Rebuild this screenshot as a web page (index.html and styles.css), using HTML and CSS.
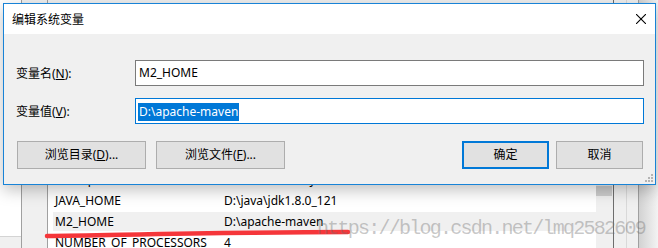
FILE: index.html
```html
<!DOCTYPE html>
<html lang="zh-CN">
<head>
    <meta charset="UTF-8">
    <meta name="viewport" content="width=device-width, initial-scale=1.0">
    <title>编辑系统变量</title>
    <link rel="stylesheet" href="styles.css">
</head>
<body>
    <!-- Window behind the dialog: the system variables list -->
    <div class="envwin">
        <div class="pane-left"></div>
        <div class="pane-gap"></div>
        <div class="varlist">
            <div class="list-head"></div>
            <div class="var-row"><span class="var-name">ComSpec</span><span>C:\WINDOWS\system32\cmd.exe</span></div>
            <div class="var-row"><span class="var-name">JAVA_HOME</span><span>D:\java\jdk1.8.0_121</span></div>
            <div class="var-row is-hover"><span class="var-name">M2_HOME</span><span>D:\apache-maven</span></div>
            <div class="var-row"><span class="var-name">NUMBER_OF_PROCESSORS</span><span>4</span></div>
        </div>
        <div class="vscroll"><div class="vthumb"></div></div>
        <div class="edge-dark"></div>
        <div class="strip"></div>
        <div class="strip strip-2"></div>
        <div class="shade"></div>
    </div>

    <!-- Hand drawn red mark under the M2_HOME row -->
    <svg class="redmark" width="320" height="16" viewBox="0 0 320 16">
        <path d="M7 10 C 80 9, 200 6, 308 6" fill="none" stroke="#f5363a" stroke-width="4.5" stroke-linecap="round"/>
    </svg>

    <div class="watermark">https://blog.csdn.net/lmq2582609</div>

    <!-- The edit dialog -->
    <div class="dialog">
        <div class="titlebar">
            <span class="title">编辑系统变量</span>
            <svg class="close" width="10" height="10" viewBox="0 0 10 10">
                <path d="M0 0 L10 10 M10 0 L0 10" stroke="#000" stroke-width="1.1"/>
            </svg>
        </div>
        <div class="dialog-body">
            <div class="field">
                <label>变量名(<u>N</u>):</label>
                <div class="textbox">M2_HOME</div>
            </div>
            <div class="field">
                <label>变量值(<u>V</u>):</label>
                <div class="textbox is-focus"><span class="selected">D:\apache-maven</span></div>
            </div>
            <div class="buttons">
                <div class="btn">浏览目录(<u>D</u>)...</div>
                <div class="btn">浏览文件(<u>F</u>)...</div>
                <div class="spacer"></div>
                <div class="btn btn-small is-default">确定</div>
                <div class="btn btn-small">取消</div>
            </div>
        </div>
        <svg class="grip" width="10" height="9" viewBox="0 0 10 9">
            <rect x="7" y="0" width="2" height="2" fill="#b4b4b4"/>
            <rect x="4" y="3" width="2" height="2" fill="#b4b4b4"/>
            <rect x="7" y="3" width="2" height="2" fill="#b4b4b4"/>
            <rect x="1" y="6" width="2" height="2" fill="#b4b4b4"/>
            <rect x="4" y="6" width="2" height="2" fill="#b4b4b4"/>
            <rect x="7" y="6" width="2" height="2" fill="#b4b4b4"/>
        </svg>
    </div>
</body>
</html>
```

FILE: styles.css
```css
/* Page reset and base font */
body {
    margin: 0;
    font-family: "Noto Sans", "Noto Sans CJK SC", sans-serif;
    font-size: 12px;
    color: #000;
    overflow: hidden;
}

/* Background window */
.envwin {
    display: flex;
    height: 248px;
    background: #fff;
}

.envwin > div {
    flex-shrink: 0;
}

.pane-left {
    width: 21px;
    border-right: 1px solid #a0a0a0;
    background: linear-gradient(#fff 236px, #d4d4d4 236px, #d4d4d4 237px, #f0f0f0 237px);
}

.pane-gap {
    width: 25px;
    border-right: 1px solid #a0a0a0;
    background: #f0f0f0;
}

.varlist {
    width: 548px;
    background: #fff;
}

.list-head {
    height: 168px;
    background: #f0f0f0;
}

.var-row {
    display: flex;
    height: 19px;
    line-height: 19px;
    margin: 2px 0 0 5px;
    padding-left: 2px;
    white-space: nowrap;
}

.var-row.is-hover {
    background: #f0f0f0;
}

.var-name {
    width: 169px;
}

.vscroll {
    width: 17px;
    background: #f0f0f0;
}

.vthumb {
    margin-top: 186px;
    width: 16px;
    height: 10px;
    background: #cdcdcd;
}

.edge-dark {
    width: 1px;
    background: #6e6e6e;
}

.strip {
    width: 12px;
    background: #f0f0f0;
    border-right: 1px solid #d9d9d9;
}

.strip-2 {
    width: 11px;
    border-right-color: #a0a0a0;
}

.shade {
    flex: 1;
    background: linear-gradient(to right, #d2d2d2, #f3f3f3);
}

/* Red annotation and blog watermark */
.redmark {
    position: absolute;
    left: 40px;
    top: 226px;
}

.watermark {
    position: absolute;
    left: 317px;
    top: 219px;
    font-family: "Liberation Mono", monospace;
    font-size: 20px;
    line-height: 20px;
    letter-spacing: -1.75px;
    color: rgba(110, 110, 110, 0.38);
    white-space: nowrap;
}

/* Dialog window */
.dialog {
    position: absolute;
    left: 3px;
    top: 3px;
    width: 651px;
    height: 180px;
    border: 1px solid #1883d7;
    background: #f0f0f0;
    box-shadow: 0 5px 15px rgba(0, 0, 0, 0.25);
    display: flex;
    flex-direction: column;
}

.titlebar {
    height: 30px;
    background: #fff;
    display: flex;
    align-items: center;
    justify-content: space-between;
    padding: 0 9px 0 8px;
}

.dialog-body {
    flex: 1;
    padding: 26px 11px 0 12px;
}

.field {
    display: grid;
    grid-template-columns: 119px 1fr;
    align-items: center;
    margin-bottom: 12px;
}

.textbox {
    height: 24px;
    line-height: 24px;
    border: 1px solid #7a7a7a;
    background: #fff;
    padding-left: 3px;
    white-space: nowrap;
}

.textbox.is-focus {
    border-color: #0078d7;
    padding-left: 2px;
}

.selected {
    display: inline-block;
    line-height: 18px;
    padding: 0 1px;
    background: #0078d7;
    color: #fff;
    vertical-align: middle;
}

.buttons {
    display: flex;
    margin-top: 17px;
    padding: 0 1px;
}

.btn {
    width: 127px;
    height: 26px;
    line-height: 26px;
    border: 1px solid #adadad;
    background: #e1e1e1;
    text-align: center;
    margin-right: 10px;
}

.spacer {
    flex: 1;
}

.btn-small {
    width: 85px;
    margin-right: 7px;
}

.btn-small:last-child {
    margin-right: 0;
}

.btn.is-default {
    width: 83px;
    height: 24px;
    line-height: 24px;
    border: 2px solid #0078d7;
}

.grip {
    position: absolute;
    right: 1px;
    bottom: 1px;
}
```
